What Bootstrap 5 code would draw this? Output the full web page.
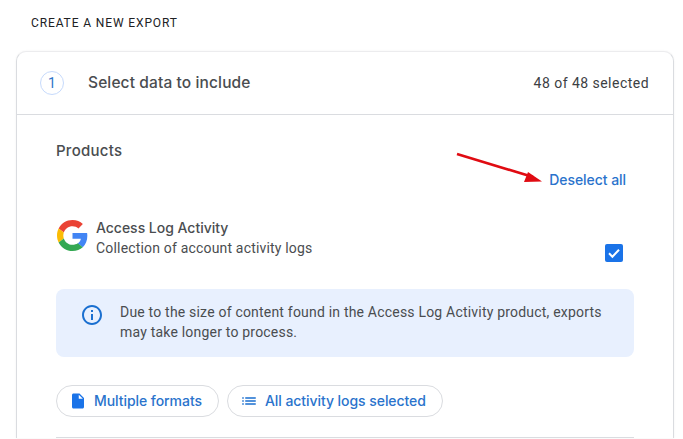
<!doctype html>
<html lang="en"><head><meta charset="utf-8"><title>Create a new export</title>
<link rel="stylesheet" href="https://cdn.jsdelivr.net/npm/bootstrap@5.3.0/dist/css/bootstrap.min.css">
<style>
html,body{height:439px;overflow:hidden;background:#fff}
body{font-family:Roboto,"Liberation Sans",sans-serif;color:#3c4043;font-size:14px;position:relative}
.page-wrap{padding:15px 9px 0 16px}
.eyebrow{font-size:12px;letter-spacing:.88px;color:#202124;line-height:16px;margin:0 0 20px 15px;font-weight:400}
.step-card{border:1px solid #dadce0;border-top-color:#ececee;border-bottom:0;border-radius:10px 10px 0 0;box-shadow:0 0 2px rgba(60,64,67,.08)}
.step-head{height:63px;padding:0 24px 0 23px;border-bottom:1px solid #dadce0}
.step-num{width:24px;height:24px;border:1px solid #c6dafc;border-radius:50%;color:#2f74c8;font-size:14px;margin-right:24px}
.step-title{font-family:Inter,Roboto,sans-serif;font-size:15.5px;font-weight:500;color:#4a4d50;letter-spacing:.12px}
.step-count{font-size:14px;letter-spacing:.47px;color:#3c4043}
.step-body{padding:26px 39px 0 39px}
.prod-label{font-family:Inter,Roboto,sans-serif;font-size:15px;font-weight:500;color:#4a4d50;line-height:20px;letter-spacing:.25px}
.desel{font-family:Inter,Roboto,sans-serif;color:#2a73cc;font-size:14px;font-weight:500;letter-spacing:-.05px;text-decoration:none;line-height:18px;padding-right:8px;margin-top:30px}
.prod-row{margin-top:29px;height:47px}
.prod-logo{width:31px;height:31px;margin:2px 8px 0 1px;flex:none}
.prod-name{font-family:Inter,Roboto,sans-serif;font-size:14px;font-weight:500;line-height:20px;color:#4a4d50;letter-spacing:-.02px}
.prod-desc{font-size:14px;line-height:20px;color:#4a4d50;letter-spacing:.18px}
.tick{width:18px;height:18px;background:#1a73e8;border-radius:2px;margin:26px 11px 0 0}
.notice{background:#e8f0fe;border-radius:8px;height:68px;margin-top:24px;padding:13px 20px 0 24px;font-size:14px;line-height:20px;letter-spacing:.2px;color:#4a4d50}
.notice svg{width:24px;height:24px;margin-right:16px;flex:none;margin-top:1px}
.chip-row{margin-top:28px;gap:8px}
.chip{font-family:Inter,Roboto,sans-serif;height:32px;border:1px solid #dadce0;border-radius:16px;color:#2a73cc;font-size:14px;font-weight:500;letter-spacing:-.06px;padding:0 16px 2px 12px;background:#fff}
.chip svg{width:18px;height:18px;margin:2px 7px 0 0;flex:none}
.rule-line{border-top:1px solid #dadce0;margin-top:20px}
.red-arrow{position:absolute;left:450px;top:148px;width:100px;height:40px}
</style></head>
<body>
<div class="page-wrap">
<h1 class="eyebrow">CREATE A NEW EXPORT</h1>
<div class="step-card bg-white">
  <div class="step-head d-flex align-items-center">
    <span class="step-num d-flex align-items-center justify-content-center">1</span>
    <span class="step-title flex-grow-1">Select data to include</span>
    <span class="step-count">48 of 48 selected</span>
  </div>
  <div class="step-body">
    <div class="d-flex justify-content-between align-items-start">
      <div class="prod-label">Products</div>
      <a href="#" class="desel">Deselect all</a>
    </div>
    <div class="prod-row d-flex align-items-start">
      <svg class="prod-logo" viewBox="0 0 48 48"><path fill="#EA4335" d="M24 9.5c3.54 0 6.71 1.22 9.21 3.6l6.85-6.85C35.9 2.38 30.47 0 24 0 14.62 0 6.51 5.38 2.56 13.22l7.98 6.19C12.43 13.72 17.74 9.5 24 9.5z"/><path fill="#4285F4" d="M46.98 24.55c0-1.57-.15-3.09-.38-4.55H24v9.02h12.94c-.58 2.96-2.26 5.48-4.78 7.18l7.73 6c4.51-4.18 7.09-10.36 7.09-17.65z"/><path fill="#FBBC05" d="M10.53 28.59c-.48-1.45-.76-2.99-.76-4.59s.27-3.14.76-4.59l-7.98-6.19C.92 16.46 0 20.12 0 24c0 3.88.92 7.54 2.56 10.78l7.97-6.19z"/><path fill="#34A853" d="M24 48c6.48 0 11.93-2.13 15.89-5.81l-7.73-6c-2.15 1.45-4.92 2.3-8.16 2.3-6.26 0-11.57-4.22-13.47-9.91l-7.98 6.19C6.51 42.62 14.62 48 24 48z"/></svg>
      <div class="flex-grow-1">
        <div class="prod-name">Access Log Activity</div>
        <div class="prod-desc">Collection of account activity logs</div>
      </div>
      <span class="tick d-flex align-items-center justify-content-center"><svg width="14" height="14" viewBox="0 0 14 14"><path d="M2 7.3l3.4 3.4L12 3.8" fill="none" stroke="#fff" stroke-width="2"/></svg></span>
    </div>
    <div class="notice d-flex align-items-start">
      <svg viewBox="0 0 24 24"><path fill="#1a6fd0" d="M11 7h2v2h-2zm0 4h2v6h-2zm1-9C6.48 2 2 6.48 2 12s4.48 10 10 10 10-4.48 10-10S17.52 2 12 2zm0 18c-4.41 0-8-3.59-8-8s3.59-8 8-8 8 3.59 8 8-3.59 8-8 8z"/></svg>
      <div>Due to the size of content found in the Access Log Activity product, exports may take longer to process.</div>
    </div>
    <div class="chip-row d-flex">
      <span class="chip d-inline-flex align-items-center"><svg viewBox="0 0 24 24"><path fill="#1a73e8" d="M14 2H6c-1.1 0-2 .9-2 2v16c0 1.1.9 2 2 2h12c1.100 0 2-.9 2-2V8l-6-6zm-1 7V3.500L18.500 9H13z"/></svg>Multiple formats</span>
      <span class="chip d-inline-flex align-items-center"><svg viewBox="0 0 24 24"><path fill="#1a6fd0" d="M3 13h2v-2H3v2zm0 4h2v-2H3v2zm0-8h2V7H3v2zm4 4h14v-2H7v2zm0 4h14v-2H7v2zM7 7v2h14V7H7z"/></svg>All activity logs selected</span>
    </div>
    <div class="rule-line"></div>
  </div>
</div>
</div>
<svg class="red-arrow" viewBox="0 0 100 40"><path d="M7 6L83 29" stroke="#e00b12" stroke-width="2.600" fill="none"/><path d="M92 33.500L74 34L78 24z" fill="#e00b12"/></svg>
</body></html>
